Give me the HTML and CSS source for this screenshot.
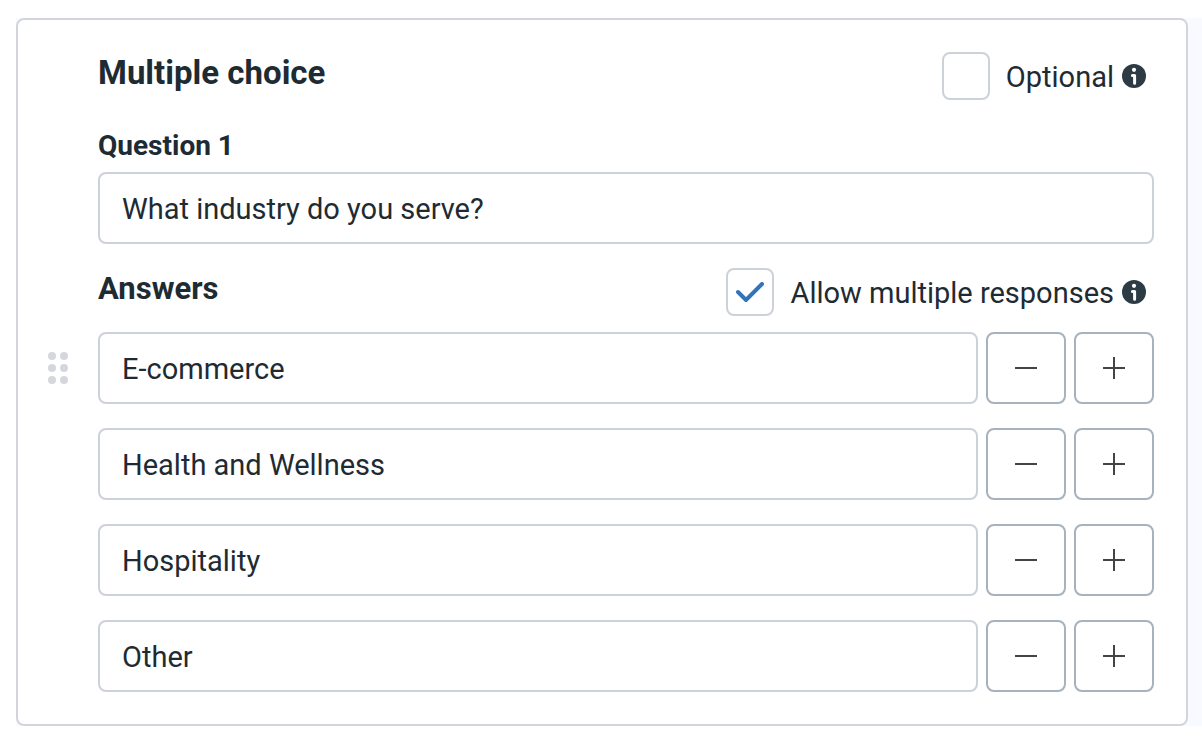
FILE: index.html
```html
<!DOCTYPE html>
<html lang="en">
<head>
    <meta charset="UTF-8">
    <meta name="viewport" content="width=device-width, initial-scale=1">
    <title>Multiple choice question</title>
    <link rel="stylesheet" href="styles.css">
</head>

<body>
    <!-- Shared icons -->
    <svg class="icon-defs" aria-hidden="true">
        <symbol id="icon-info" viewBox="0 0 24 24">
            <circle cx="12" cy="12" r="12" fill="#2d3b45"/>
            <circle cx="12" cy="5.8" r="2.1" fill="#fff"/>
            <path d="M10.4 11.4h2.2v7.8" fill="none" stroke="#fff" stroke-width="3" stroke-linecap="round" stroke-linejoin="round"/>
        </symbol>
        <symbol id="icon-minus" viewBox="0 0 22 22">
            <path d="M0 11h22" stroke="#444" stroke-width="2"/>
        </symbol>
        <symbol id="icon-plus" viewBox="0 0 22 22">
            <path d="M0 11h22M11 0v22" stroke="#444" stroke-width="2"/>
        </symbol>
    </svg>

    <main class="page">
        <form class="question-card">
            <svg class="drag-handle" viewBox="0 0 20 32" aria-hidden="true">
                <g fill="#d5d7dd">
                    <circle cx="4" cy="4" r="4"/>
                    <circle cx="16" cy="4" r="4"/>
                    <circle cx="4" cy="16" r="4"/>
                    <circle cx="16" cy="16" r="4"/>
                    <circle cx="4" cy="28" r="4"/>
                    <circle cx="16" cy="28" r="4"/>
                </g>
            </svg>

            <div class="question-body">
                <div class="row-header">
                    <h2>Multiple choice</h2>
                    <div class="option">
                        <input type="checkbox" id="optional">
                        <label for="optional">Optional</label>
                        <svg class="info"><use href="#icon-info"/></svg>
                    </div>
                </div>

                <label class="question-label" for="question">Question 1</label>
                <input type="text" id="question" value="What industry do you serve?">

                <div class="row-header answers-header">
                    <h3>Answers</h3>
                    <div class="option">
                        <input type="checkbox" id="multiple" checked>
                        <label for="multiple">Allow multiple responses</label>
                        <svg class="info"><use href="#icon-info"/></svg>
                    </div>
                </div>

                <div class="answers">
                    <div class="answer">
                        <input type="text" aria-label="Answer 1" value="E-commerce">
                        <button type="button" aria-label="Remove answer"><svg><use href="#icon-minus"/></svg></button>
                        <button type="button" aria-label="Add answer"><svg><use href="#icon-plus"/></svg></button>
                    </div>
                    <div class="answer">
                        <input type="text" aria-label="Answer 2" value="Health and Wellness">
                        <button type="button" aria-label="Remove answer"><svg><use href="#icon-minus"/></svg></button>
                        <button type="button" aria-label="Add answer"><svg><use href="#icon-plus"/></svg></button>
                    </div>
                    <div class="answer">
                        <input type="text" aria-label="Answer 3" value="Hospitality">
                        <button type="button" aria-label="Remove answer"><svg><use href="#icon-minus"/></svg></button>
                        <button type="button" aria-label="Add answer"><svg><use href="#icon-plus"/></svg></button>
                    </div>
                    <div class="answer">
                        <input type="text" aria-label="Answer 4" value="Other">
                        <button type="button" aria-label="Remove answer"><svg><use href="#icon-minus"/></svg></button>
                        <button type="button" aria-label="Add answer"><svg><use href="#icon-plus"/></svg></button>
                    </div>
                </div>
            </div>
        </form>
    </main>
</body>
</html>
```
FILE: styles.css
```css
* {
    box-sizing: border-box;
}

body {
    margin: 0;
    padding: 18px 0 16px 16px;
    background-color: #fff;
    color: #1e2b33;
    font-family: Roboto, "Liberation Sans", sans-serif;
    font-size: 29px;
    line-height: 36px;
}

.icon-defs {
    display: none;
}

.page {
    padding-right: 14px;
    background-color: #f9faff;
}

.question-card {
    display: flex;
    align-items: center;
    gap: 30px;
    padding: 32px 32px 32px 30px;
    border: 2px solid #d2d5da;
    border-radius: 8px;
    background-color: #fff;
}

.drag-handle {
    flex: none;
    width: 20px;
    height: 32px;
    margin-bottom: 8px;
    cursor: grab;
}

.question-body {
    flex: 1;
    min-width: 0;
}

.row-header {
    display: flex;
    justify-content: space-between;
    align-items: flex-start;
}

h2, h3 {
    margin: 0;
    font-size: 33px;
    line-height: 42px;
    font-weight: 700;
}

h3 {
    font-size: 31px;
}

.option {
    display: flex;
    align-items: center;
    padding-right: 8px;
}

.option label {
    padding: 2px 8px 0 16px;
}

.info {
    width: 24px;
    height: 24px;
}

.question-label {
    display: block;
    margin: 28px 0 8px;
    font-size: 28px;
    font-weight: 700;
}

input[type="text"] {
    width: 100%;
    min-width: 0;
    height: 72px;
    padding: 2px 22px 0;
    border: 2px solid #cdd1d8;
    border-radius: 8px;
    background-color: #fff;
    color: inherit;
    font: inherit;
}

input[type="checkbox"] {
    appearance: none;
    width: 48px;
    height: 48px;
    margin: 0;
    border: 2px solid #cdd1d8;
    border-radius: 8px;
    background-color: #fff;
}

input[type="checkbox"]:checked {
    background: url("data:image/svg+xml,%3Csvg xmlns='http://www.w3.org/2000/svg' viewBox='0 0 28 20'%3E%3Cpath d='M2 10l8 8L26 2' fill='none' stroke='%233274ba' stroke-width='4' stroke-linecap='round'/%3E%3C/svg%3E") center / 28px 20px no-repeat;
}

.answers-header {
    margin: 24px 0 16px;
}

.answers {
    display: flex;
    flex-direction: column;
    gap: 24px;
}

.answer {
    display: flex;
    gap: 8px;
}

.answer button {
    display: flex;
    flex: none;
    align-items: center;
    justify-content: center;
    width: 80px;
    height: 72px;
    padding: 0;
    border: 2px solid #a7b2bf;
    border-radius: 8px;
    background-color: #fff;
    cursor: pointer;
}

.answer button svg {
    width: 22px;
    height: 22px;
}
```
